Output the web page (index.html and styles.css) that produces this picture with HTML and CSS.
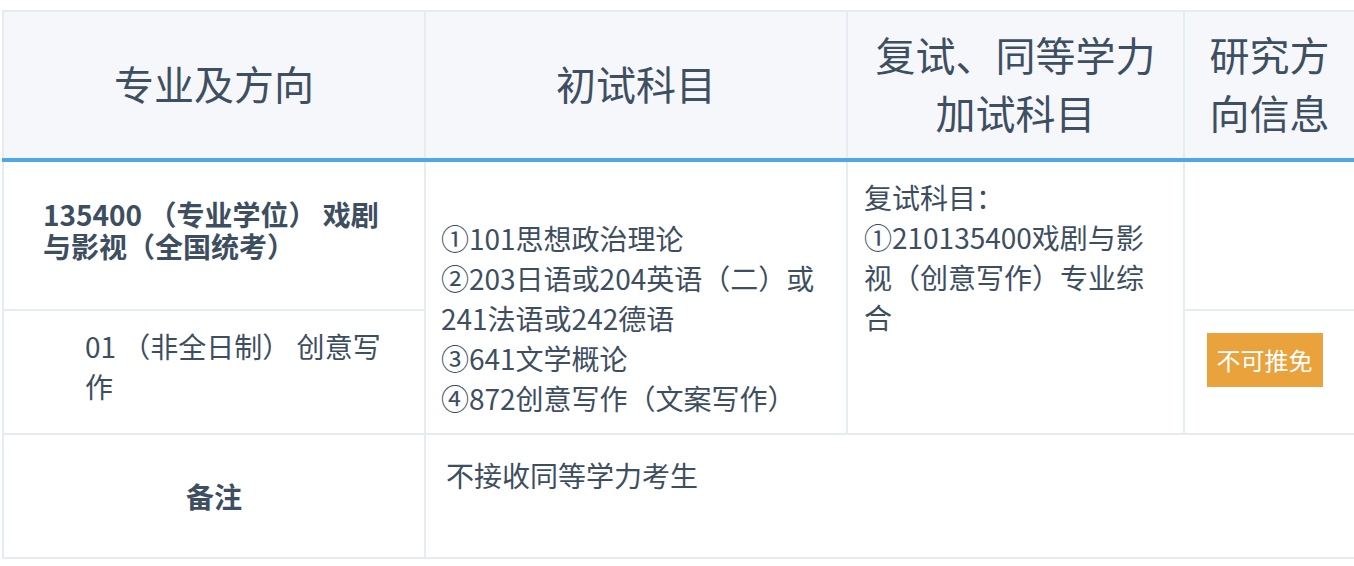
FILE: index.html
```html
<!DOCTYPE html>
<html lang="zh-CN">
<head>
<meta charset="utf-8">
<title>招生专业目录</title>
<link rel="stylesheet" href="styles.css">
</head>
<body>
<div class="page">
  <table class="plan">
    <colgroup>
      <col class="c1"><col class="c2"><col class="c3"><col class="c4">
    </colgroup>
    <thead>
      <tr class="head">
        <th>专业及方向</th>
        <th>初试科目</th>
        <th>复试、同等学力加试科目</th>
        <th>研究方向信息</th>
      </tr>
    </thead>
    <tbody>
      <tr class="r1">
        <td class="major"><div class="major-name">135400 （专业学位） 戏剧与影视（全国统考）</div></td>
        <td rowspan="2" class="exam">①101思想政治理论<br>②203日语或204英语（二）或241法语或242德语<br>③641文学概论<br>④872创意写作（文案写作）</td>
        <td rowspan="2" class="retest">复试科目：<br>①210135400戏剧与影视（创意写作）专业综合</td>
        <td class="info-empty"></td>
      </tr>
      <tr class="r2">
        <td class="dir">01 （非全日制） 创意写作</td>
        <td class="info"><span class="badge">不可推免</span></td>
      </tr>
      <tr class="r3">
        <td class="note-h">备注</td>
        <td colspan="3" class="note">不接收同等学力考生</td>
      </tr>
    </tbody>
  </table>
</div>
</body>
</html>
```

FILE: styles.css
```css
html, body {
  margin: 0;
  padding: 0;
  background: #ffffff;
}

body {
  font-family: "Noto Sans CJK SC", "Noto Sans", sans-serif;
  color: #3e4e61;
  overflow: hidden;
}

.page {
  padding: 10px 0 0 2px;
}

.plan {
  width: 1352px;
  table-layout: fixed;
  border-collapse: collapse;
  border: 2px solid #e6edf2;
}

.c1 { width: 422px; }
.c2 { width: 422px; }
.c3 { width: 337px; }
.c4 { width: 171px; }

.plan th,
.plan td {
  border: 2px solid #e6edf2;
}

.plan .head th {
  height: 142px;
  background: #f5f7fb;
  font-size: 40px;
  font-weight: normal;
  line-height: 58px;
  color: #3e4f62;
  text-align: center;
  vertical-align: middle;
  padding: 0 20px 4px;
  border-bottom: 4px solid #4ea8e2;
}

.plan td {
  font-size: 28px;
  line-height: 40px;
}

.plan .major {
  height: 135px;
  vertical-align: middle;
  padding: 0 38px 12px 39px;
}

.major-name {
  font-weight: bold;
  line-height: 32px;
}

.plan .info-empty {
  padding: 0;
}

.plan .dir {
  height: 110px;
  vertical-align: middle;
  padding: 0 36px 12px 81px;
}

.plan .exam {
  vertical-align: top;
  padding: 56px 18px 0 15px;
}

.plan .retest {
  vertical-align: top;
  padding: 15px 19px 0 16px;
}

.plan .info {
  text-align: center;
  vertical-align: middle;
  padding: 0 10px 24px 0;
}

.badge {
  display: inline-block;
  background: #e9a23c;
  color: #ffffff;
  font-size: 24px;
  line-height: 34px;
  padding: 10px 10px;
}

.plan .note-h {
  height: 122px;
  padding: 0;
  text-align: center;
  vertical-align: middle;
  font-weight: bold;
}

.plan .note {
  vertical-align: top;
  padding: 20px 20px 0 20px;
}
```
